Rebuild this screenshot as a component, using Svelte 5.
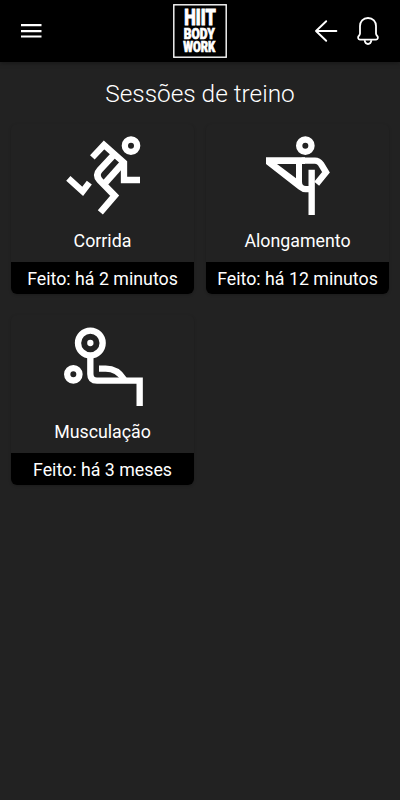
<script lang="ts">
  interface Session {
    icon: 'run' | 'stretch' | 'lift';
    name: string;
    done: string;
  }

  const sessions: Session[] = [
    { icon: 'run', name: 'Corrida', done: 'há 2 minutos' },
    { icon: 'stretch', name: 'Alongamento', done: 'há 12 minutos' },
    { icon: 'lift', name: 'Musculação', done: 'há 3 meses' },
  ];
</script>

<div class="app">
  <header class="topbar">
    <button class="icon-btn" aria-label="Menu">
      <svg width="22" height="16" viewBox="0 0 22 16" fill="#fff">
        <path d="M0 1h20.5v2.2H0zM0 7h20.5v2.2H0zM0 12.4h20.5v2.2H0z" />
      </svg>
    </button>

    <svg class="logo" width="54" height="54" viewBox="0 0 54 54">
      <rect x="0.8" y="0.8" width="52.4" height="52.4" fill="none" stroke="#fff" stroke-width="1.4" />
      <g fill="#fff" stroke="#fff" text-anchor="middle">
        <text x="27" y="20.6" font-size="21.5" stroke-width="0.9" textLength="31.5" lengthAdjust="spacingAndGlyphs">HIIT</text>
        <text x="26.3" y="34.5" font-size="14.6" stroke-width="0.7" textLength="31" lengthAdjust="spacingAndGlyphs">BODY</text>
        <text x="26.3" y="47.5" font-size="13.8" stroke-width="0.7" textLength="32" lengthAdjust="spacingAndGlyphs">WORK</text>
      </g>
    </svg>

    <div class="actions">
      <button class="icon-btn" aria-label="Voltar">
        <svg width="24" height="24" viewBox="0 0 24 24" fill="none" stroke="#fff" stroke-width="1.9" stroke-linecap="round" stroke-linejoin="round">
          <path d="M12.2 2.2L2 12l10.2 9.8M2 12h20.4" />
        </svg>
      </button>
      <button class="icon-btn" aria-label="Notificações">
        <svg width="24" height="30" viewBox="0 0 24 30" fill="none" stroke="#fff" stroke-width="1.8" stroke-linejoin="round">
          <path d="M12 2C7 2 4 5.5 4 10v7.5c0 1.2-.7 1.8-1.4 2.6-.8.9-.8 3.5 1.2 3.5h16.4c2 0 2-2.6 1.2-3.5-.7-.8-1.4-1.4-1.4-2.6V10C20 5.5 17 2 12 2z" />
          <path d="M8.6 24.2c.3 2.3 1.6 3.8 3.4 3.8s3.1-1.5 3.4-3.8" />
        </svg>
      </button>
    </div>
  </header>

  <main>
    <h1>Sessões de treino</h1>

    <div class="sessions">
      {#each sessions as session}
        <article class="card">
          <svg class="figure" width="95" height="95" viewBox="0 0 285 285" fill="none" stroke="#fff" stroke-width="19">
            {#if session.icon === 'run'}
              <circle cx="228" cy="62" r="18.5" />
              <path d="M112 97L147 60L207 113V165H255" />
              <path d="M178 88L134 135Q120 150 134 166L179 212L136 262" stroke-width="20" />
              <path d="M206 112L147 178" stroke-width="20" />
              <path d="M40 160L83 199L103 173" />
            {:else if session.icon === 'stretch'}
              <!-- drawn on a 255-wide grid, so centred by the shift -->
              <g transform="translate(15 0)">
                <circle cx="151" cy="62" r="18.5" />
                <path d="M33 97V117L130 193Q141 202 152 202H165V183H153Q141 183 141 170V108H123V160L66 117H150V97Z" fill="#fff" stroke="none" />
                <path d="M140 107H180Q191 107 198 117L213 142L185 176" />
                <path d="M170 134V270" />
              </g>
            {:else}
              <g transform="translate(0 12)">
                <circle cx="106" cy="69" r="37" />
                <circle cx="106" cy="69" r="9.5" fill="#fff" stroke="none" />
                <circle cx="55" cy="163" r="18.5" />
                <path d="M106 106V162Q106 182 126 182H254V258" />
                <path d="M132 146H152Q187 146 207 178" />
              </g>
            {/if}
          </svg>
          <h2>{session.name}</h2>
          <footer>Feito: {session.done}</footer>
        </article>
      {/each}
    </div>
  </main>
</div>

<style>
  :global(body) {
    background: #222;
  }

  .app {
    min-height: 800px;
    background: #222;
    color: #fff;
    font-family: Roboto, sans-serif;
  }

  .topbar {
    display: grid;
    grid-template-columns: 1fr 54px 1fr;
    align-items: center;
    height: 62px;
    padding: 0 20px;
    box-sizing: border-box;
    background: #000;
    box-shadow: 0 1px 5px rgba(0, 0, 0, 0.35);
  }

  .icon-btn {
    display: flex;
    justify-self: start;
    padding: 0;
    border: 0;
    background: none;
  }

  .topbar > .icon-btn {
    padding-left: 1px;
  }

  .logo {
    font-family: Roboto, sans-serif;
    font-weight: 900;
  }

  .actions {
    display: flex;
    justify-content: flex-end;
    align-items: center;
    gap: 18px;
  }

  h1 {
    margin: 0;
    padding-top: 16px;
    font-size: 24.4px;
    font-weight: 300;
    line-height: 32px;
    text-align: center;
  }

  .sessions {
    display: grid;
    grid-template-columns: 183px 183px;
    gap: 21px 12px;
    padding: 14px 11px;
  }

  .card {
    display: flex;
    flex-direction: column;
    align-items: center;
    height: 170px;
    border-radius: 6px;
    overflow: hidden;
    box-shadow: 0 1px 3px rgba(0, 0, 0, 0.22);
  }

  .figure {
    flex: none;
    margin-top: 1px;
  }

  h2 {
    margin: 0;
    padding-top: 9px;
    height: 33px;
    font-size: 17.8px;
    font-weight: 400;
    line-height: 24px;
  }

  footer {
    width: 100%;
    height: 32px;
    background: #000;
    font-size: 17.8px;
    line-height: 34px;
    text-align: center;
  }
</style>
